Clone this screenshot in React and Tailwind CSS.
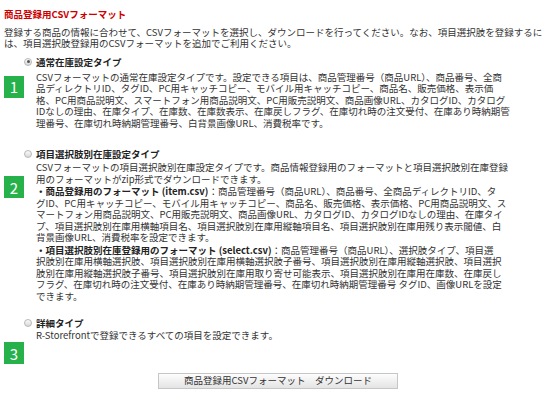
import React from "react";

const font = { fontFamily: '"Noto Sans CJK JP", "Noto Sans", sans-serif' };

function Radio({ checked }) {
  return (
    <span className="relative flex h-[8px] w-[8px] items-center justify-center rounded-full border border-[#b8b8b8] bg-gradient-to-b from-[#fbfbfb] to-[#d8d8d8]">
      {checked && <span className="block h-[3px] w-[3px] rounded-full bg-[#555]" />}
    </span>
  );
}

function Badge({ n, className }) {
  return (
    <div className={"flex h-[22px] w-[20px] items-center justify-center bg-[#27b14b] text-[15px] leading-none text-white " + className}>
      {n}
    </div>
  );
}

function Section({ n, checked, title, children, className, descClass, badgeClass }) {
  return (
    <div className={"flex " + className}>
      <div className="flex w-[32px] shrink-0 flex-col">
        <div className="flex h-[14px] items-center justify-end pr-[4px]">
          <Radio checked={checked} />
        </div>
        <Badge n={n} className={badgeClass} />
      </div>
      <div>
        <div className="h-[14px] leading-[14px] font-bold text-[#222]">{title}</div>
        <div className={descClass}>{children}</div>
      </div>
    </div>
  );
}

function Lines({ lines, className }) {
  return (
    <div className={className}>
      {lines.map((l, i) => (
        <div key={i} className="h-[11.5px] whitespace-nowrap">
          {l}
        </div>
      ))}
    </div>
  );
}

export default function App() {
  return (
    <div
      className="h-[400px] w-[556px] overflow-hidden bg-white px-[4px] pt-[9px] text-[9.5px] leading-[11.5px] text-[#333]"
      style={font}
    >
      <div className="h-[11.5px] font-bold text-[#cc0000]">商品登録用CSVフォーマット</div>
      <Lines
        className="mt-[6px]"
        lines={[
          "登録する商品の情報に合わせて、CSVフォーマットを選択し、ダウンロードを行ってください。なお、項目選択肢を登録するに",
          "は、項目選択肢登録用のCSVフォーマットを追加でご利用ください。",
        ]}
      />

      <Section
        n="1"
        checked
        title="通常在庫設定タイプ"
        className="mt-[5px]"
        descClass="mt-[3px]"
        badgeClass="mt-[7px]"
      >
        <Lines
          lines={[
            "CSVフォーマットの通常在庫設定タイプです。設定できる項目は、商品管理番号（商品URL）、商品番号、全商",
            "品ディレクトリID、タグID、PC用キャッチコピー、モバイル用キャッチコピー、商品名、販売価格、表示価",
            "格、PC用商品説明文、スマートフォン用商品説明文、PC用販売説明文、商品画像URL、カタログID、カタログ",
            "IDなしの理由、在庫タイプ、在庫数、在庫数表示、在庫戻しフラグ、在庫切れ時の注文受付、在庫あり時納期管",
            "理番号、在庫切れ時納期管理番号、白背景画像URL、消費税率です。",
          ]}
        />
      </Section>

      <Section
        n="2"
        title="項目選択肢別在庫設定タイプ"
        className="mt-[18px]"
        descClass="mt-[1px]"
        badgeClass="mt-[15px]"
      >
        <Lines
          lines={[
            "CSVフォーマットの項目選択肢別在庫設定タイプです。商品情報登録用のフォーマットと項目選択肢別在庫登録",
            "用のフォーマットがzip形式でダウンロードできます。",
          ]}
        />
        <Lines
          className="mt-[1px]"
          lines={[
            <>
              <span className="font-bold text-[#222]">・商品登録用のフォーマット (item.csv)</span>
              ：商品管理番号（商品URL）、商品番号、全商品ディレクトリID、タ
            </>,
            "グID、PC用キャッチコピー、モバイル用キャッチコピー、商品名、販売価格、表示価格、PC用商品説明文、ス",
            "マートフォン用商品説明文、PC用販売説明文、商品画像URL、カタログID、カタログIDなしの理由、在庫タイ",
            "プ、項目選択肢別在庫用横軸項目名、項目選択肢別在庫用縦軸項目名、項目選択肢別在庫用残り表示閾値、白",
            "背景画像URL、消費税率を設定できます。",
          ]}
        />
        <Lines
          className="mt-[1px]"
          lines={[
            <>
              <span className="font-bold text-[#222]">・項目選択肢別在庫登録用のフォーマット (select.csv)</span>
              ：商品管理番号（商品URL）、選択肢タイプ、項目選
            </>,
            "択肢別在庫用横軸選択肢、項目選択肢別在庫用横軸選択肢子番号、項目選択肢別在庫用縦軸選択肢、項目選択",
            "肢別在庫用縦軸選択肢子番号、項目選択肢別在庫用取り寄せ可能表示、項目選択肢別在庫用在庫数、在庫戻し",
            "フラグ、在庫切れ時の注文受付、在庫あり時納期管理番号、在庫切れ時納期管理番号 タグID、画像URLを設定",
            "できます。",
          ]}
        />
      </Section>

      <Section
        n="3"
        title="詳細タイプ"
        className="mt-[14px]"
        descClass="mt-0"
        badgeClass="mt-[12px]"
      >
        <Lines lines={["R-Storefrontで登録できるすべての項目を設定できます。"]} />
      </Section>

      <div className="mt-[9px] flex justify-center">
        <button className="flex h-[16px] w-[240px] items-center justify-center border border-[#c6c6c6] bg-gradient-to-b from-[#fdfdfd] to-[#e4e4e4] text-[9.5px] leading-none text-[#333]">
          商品登録用CSVフォーマット　ダウンロード
        </button>
      </div>
    </div>
  );
}
